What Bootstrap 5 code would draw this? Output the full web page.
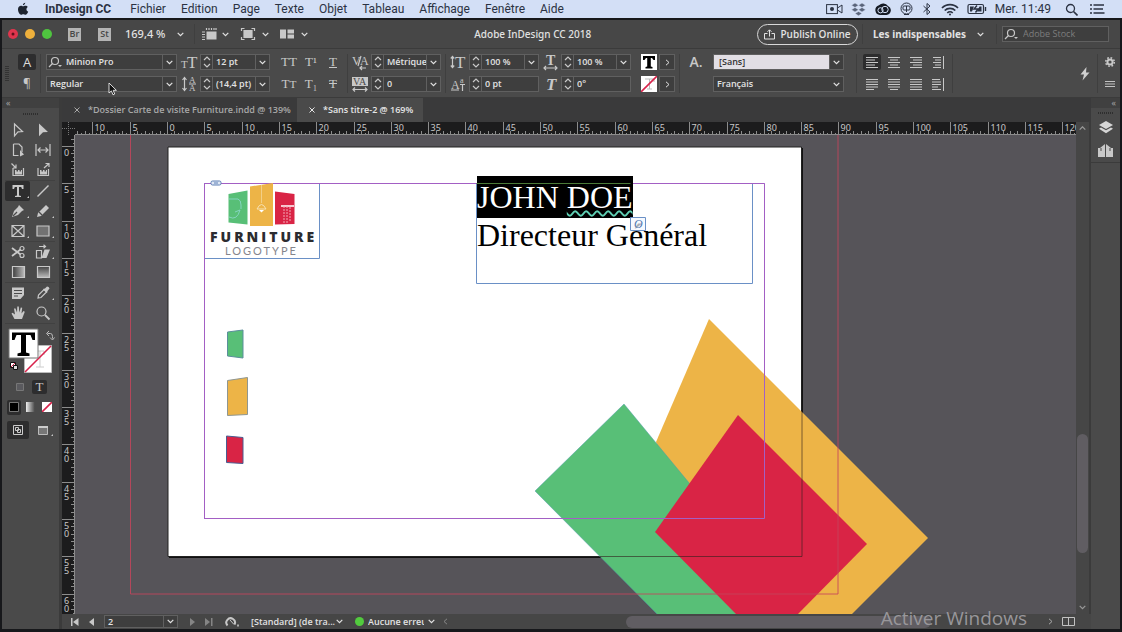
<!DOCTYPE html>
<html lang="fr">
<head>
<meta charset="utf-8">
<meta name="viewport" content="width=device-width, initial-scale=1">
<title>Adobe InDesign CC 2018</title>
<link rel="stylesheet" href="https://cdn.jsdelivr.net/npm/bootstrap@5.3.0/dist/css/bootstrap.min.css">
<style>
  :root { --panel:#4a4a4a; --line:#3b3b3b; --field:#3e3e3e; --edge:#606060; --ink:#e2e2e2; --icon:#c8c8c8; }
  html, body { height:100%; }
  body { background:#17181b; color:var(--ink); font:9px/12px "Open Sans","Noto Sans",sans-serif; overflow:hidden; }
  button, input, select { font:inherit; color:inherit; }
  button { background:none; border:0; padding:0; color:inherit; }
  svg { display:block; flex:none; }
  .ic { width:16px; height:16px; fill:none; stroke:currentColor; stroke-width:1.2; color:var(--icon); overflow:visible; }
  .chev { width:7px; height:5px; fill:none; stroke:currentColor; stroke-width:1.2; }
  .center { display:flex; align-items:center; justify-content:center; }

  .macbar { height:18px; flex:none; background:#d3dff6; color:#2b3242; font:12px/18px Roboto,sans-serif; padding-left:17px; padding-right:16px; }
  .macbar nav { gap:15px; }
  .macbar a { color:inherit; text-decoration:none; }
  .macbar svg { fill:none; stroke:#2b3242; }
  .appwin { background:var(--line); margin:2px 2px 3px 2px; min-height:0; }

  .titlebar { height:28px; flex:none; background:#474747; padding:0 11px 0 6px; }
  .dot { width:10px; height:10px; border-radius:50%; }
  .sq { width:13px; height:13px; background:#b4b4b4; color:#474747; font-size:9px; font-weight:600; line-height:12px; }
  .apptitle { font:500 10px/14px "Noto Sans",sans-serif; }
  .vsep { width:1px; align-self:stretch; background:#3f3f3f; }
  .publish { width:101px; height:21px; border:1px solid #d8d8d8; border-radius:11px; font-size:10px; font-weight:600; gap:5px; }
  .stock { width:107px; height:16px; background:var(--field); border:1px solid var(--edge); }
  .stock input { background:none; border:0; padding:0; width:80px; outline:0; }
  .stock input::placeholder { color:#7d7d7d; opacity:1; }

  .control { height:48px; flex:none; background:var(--panel); padding:5px 7px 4px 2px; margin-top:1px; }
  .pair { display:grid; grid-template-rows:16px 16px; row-gap:6px; align-content:start; }
  .rowx { display:flex; height:16px; align-items:center; }
  .fld { display:flex; flex:1; min-width:0; height:16px; background:var(--field); border:1px solid var(--edge); align-items:center; font-weight:600; }
  .fld.fixed { flex:none; }
  .fld input { background:none; border:0; padding:0 0 0 3px; flex:1; width:0; min-width:0; height:14px; outline:0; line-height:14px; }
  .fld button { width:14px; height:14px; border-left:1px solid var(--edge); flex:none; }
  .step { width:12px; height:14px; border-right:1px solid var(--edge); }
  .cell { width:22px; height:16px; }
  .on { background:#2d2d2e; border-radius:2px; }
  .metric { width:89px; }
  .serif { font:13px/16px "Liberation Serif",serif; color:var(--icon); }
  .grip { width:4px; height:16px; align-self:center; background:repeating-linear-gradient(#333 0 1px,transparent 1px 2px); }

  .tools { width:57px; flex:none; background:var(--panel); }
  .strip { height:10px; background:#404040; color:#a5a5a5; font-size:9px; line-height:9px; }
  .hgrip { height:12px; }
  .hgrip i { width:16px; height:2px; background:repeating-linear-gradient(90deg,#2e2e2e 0 1px,transparent 1px 2px); }
  .tgroup { display:grid; grid-template-columns:25px 25px; grid-auto-rows:20px; margin:0 4px 0 3px; border-bottom:1px solid #414141; }
  .tgroup button { position:relative; }
  .more::after { content:""; position:absolute; right:1px; bottom:3px; border:1px solid transparent; border-right-color:var(--icon); border-bottom-color:var(--icon); }

  .tabs { height:24px; flex:none; background:#3a3a3b; font-weight:600; font-size:9px; color:#a8a8a8; }
  .tabs button { height:24px; padding-left:12px; gap:8px; }
  .tabs .front { background:var(--panel); color:#e6e6e6; }
  .ruler { background:#1c1c1d; overflow:hidden; flex:none; }
  .ruler text { font:9px "Noto Sans",sans-serif; fill:#c8c8c8; }
  .canvas { background:#565459; position:relative; overflow:hidden; min-width:0; }
  .canvas > svg { position:absolute; left:0; top:0; }
  .textline { position:absolute; left:402px; font:32px/42px "Liberation Serif",serif; color:#000; white-space:nowrap; }
  .picked { background:#000; color:#fff; }
  .wavy { text-decoration:underline wavy #5fd0b4 2px; text-underline-offset:2px; text-decoration-skip-ink:none; }
  .vscroll { width:13px; flex:none; background:#464646; }
  .thumb { width:11px; height:119px; border-radius:6px; background:#605d62; }
  .status { height:15px; flex:none; background:#464646; font-weight:600; position:relative; }
  .hthumb { flex:0 0 305px; height:12px; border-radius:6px; background:#605d62; }
  .watermark { position:absolute; right:64px; bottom:-2px; font:19px/26px "Open Sans",sans-serif; color:#98969a; }
  .dock { width:29px; flex:none; background:var(--panel); }
</style>
</head>
<body class="d-flex flex-column">

<svg width="0" height="0" class="position-absolute" aria-hidden="true">
  <symbol id="chev" viewBox="0 0 7 5"><path d="M.7.8 3.5 3.7 6.3.8"/></symbol>
  <symbol id="updn" viewBox="0 0 8 12"><path d="M1 4 4 1l3 3M1 8l3 3 3-3"/></symbol>
  <symbol id="mag" viewBox="0 0 16 16"><circle cx="8" cy="7" r="3.5"/><path d="M5.5 9.500 2 13"/><path d="M11 11h4l-2 2z" fill="currentColor" stroke="none"/></symbol>
</svg>

<header class="macbar d-flex align-items-center">
  <svg width="12" height="14" viewBox="0 0 12 14"><path d="M8.300 .8C8 2.200 7 3.200 5.900 3.200 5.800 2 7 .9 8.300.8zM1 7.300C1 5 2.500 3.800 4 3.800c.9 0 1.400.5 2.100.5s1.300-.5 2.300-.5c1 0 1.900.5 2.400 1.300-2 1.200-1.700 3.900.4 4.700-.5 1.300-1.600 3-2.700 3-.8 0-1.200-.5-2.200-.5s-1.400.5-2.200.5C2.700 12.800 1 10 1 7.300z" fill="#1d2430" stroke="none"/></svg>
  <nav class="d-flex ms-3">
    <a href="#" class="fw-bold me-1">InDesign CC</a><a href="#">Fichier</a><a href="#">Edition</a><a href="#">Page</a><a href="#">Texte</a><a href="#">Objet</a><a href="#">Tableau</a><a href="#">Affichage</a><a href="#">Fenêtre</a><a href="#">Aide</a>
  </nav>
  <div class="d-flex align-items-center ms-auto" style="gap:8px">
    <svg width="17" height="12" viewBox="0 0 17 12"><rect x=".6" y="1.600" width="10.800" height="9"/><path d="M11.500 5 16 2v8l-4.500-3"/><circle cx="6" cy="6" r="2" fill="#2b3242" stroke="none"/></svg>
    <svg width="15" height="13" viewBox="0 0 15 13"><path d="M4 0 7.500 2.200 4 4.500.5 2.200zM11 0l3.500 2.200L11 4.500 7.500 2.200zM4 4.500l3.500 2.200L4 9 .5 6.700zM11 4.500l3.500 2.200L11 9 7.500 6.700zM7.500 8.500 11 10.500 7.500 12.800 4 10.500z" fill="#5b657b" stroke="#d3dff6" stroke-width=".5"/></svg>
    <svg width="18" height="13" viewBox="0 0 18 13"><path d="M6 12a5 5 0 0 1-1-9.800A6 6 0 0 1 14 3a4.700 4.700 0 0 1-1.500 9z" fill="#151a24" stroke="none"/><circle cx="6.500" cy="7.300" r="2.600" stroke="#d3dff6"/><circle cx="11" cy="6.500" r="3.200" stroke="#d3dff6"/></svg>
    <svg width="13" height="14" viewBox="0 0 13 14"><circle cx="6.500" cy="6.500" r="5.500"/><rect x="3" y="4" width="7" height="4" rx="1"/><path d="M6.500 4v6M4 12.500h5"/></svg>
    <svg width="12" height="14" viewBox="0 0 12 14"><path d="M2.500 4 9 10 6 12.500V1.500L9 4 2.500 10"/></svg>
    <svg width="18" height="13" viewBox="0 0 18 13" stroke-width="1.700"><path d="M1 5a11 11 0 0 1 16 0M3.700 7.500a7.500 7.500 0 0 1 10.600 0M6.300 10a3.900 3.900 0 0 1 5.400 0"/><circle cx="9" cy="11.500" r="1" fill="#2b3242" stroke="none"/></svg>
    <svg width="20" height="12" viewBox="0 0 20 12"><rect x="1" y="1.500" width="15.500" height="9" rx="1.500" stroke-width="1.200"/><path d="M3 3.500h4L5 8.500H3zM14.500 3.500h-2l-2.500 5h4.500z" fill="#2b3242" stroke="none"/><path d="M10 2.500 7 6h4L8.500 9.500M18.500 4v4" stroke-width="1.400"/></svg>
    <span style="margin-right:6px">Mer. 11:49</span>
    <svg width="13" height="13" viewBox="0 0 13 13"><circle cx="5.500" cy="5.500" r="4" stroke-width="1.300"/><path d="m8.500 8.500 4 4" stroke-width="1.600"/></svg>
    <svg width="16" height="12" viewBox="0 0 16 12" class="ms-1" stroke-width="1.600"><path d="M0 2h2M3.500 2H14M0 6h2M3.500 6H13M0 10h2M3.500 10h11"/></svg>
  </div>
</header>

<div class="appwin d-flex flex-column flex-grow-1">
  <div class="titlebar d-flex align-items-center">
    <div class="d-flex" style="gap:7px"><span class="dot center" style="background:#e0354d"><svg width="4" height="4"><circle cx="2" cy="2" r="1.500" fill="#60101c"/></svg></span><span class="dot" style="background:#eeb03c"></span><span class="dot" style="background:#4fc43f"></span></div>
    <button class="sq" style="margin-left:16px">Br</button>
    <button class="sq" style="margin-left:17px">St</button>
    <button class="d-flex align-items-center" style="margin-left:14px;gap:12px;font:500 11px/14px 'Noto Sans',sans-serif"><span>169,4 %</span><svg class="chev"><use href="#chev"/></svg></button>
    <span class="vsep my-1" style="margin-left:10px"></span>
    <button class="d-flex align-items-center" style="margin-left:6px;gap:5px"><svg class="ic" viewBox="0 0 16 16"><path d="M5.500 5.500h10v8h-10z" fill="currentColor" stroke="none"/><path d="M5.500 2v2M8 2v2M10.500 2v2M13 2v2M15 2v2M1 6h3M1 8.500h3M1 11h3M1 13.500h3"/></svg><svg class="chev"><use href="#chev"/></svg></button>
    <button class="d-flex align-items-center" style="margin-left:11px;gap:6px"><svg class="ic" viewBox="0 0 16 16"><path d="M4 4.500h8v7H4z" fill="currentColor"/><path d="M1.500 5V2.500h3M11.500 2.500h3V5M14.500 11v2.500h-3M4.500 13.500h-3V11"/></svg><svg class="chev"><use href="#chev"/></svg></button>
    <button class="d-flex align-items-center" style="margin-left:10px;gap:6px"><svg class="ic" viewBox="0 0 16 16"><path d="M1 3.500h6v9H1zM8.500 3.500H15v4H8.500zM8.500 8.500H15v4H8.500z" fill="currentColor" stroke="none"/></svg><svg class="chev"><use href="#chev"/></svg></button>
    <span class="apptitle mx-auto">Adobe InDesign CC 2018</span>
    <button class="publish center"><svg width="11" height="11" viewBox="0 0 11 11" fill="none" stroke="currentColor"><path d="M3.500 4.500h-3v5.500h10V4.500h-3M5.500 7.500V1M3.500 2.800 5.500.8l2 2"/></svg>Publish Online</button>
    <span class="vsep my-1" style="margin-left:4px"></span>
    <button class="d-flex align-items-center" style="margin-left:10px;gap:8px;font:700 10px/14px 'Noto Sans',sans-serif"><span class="text-start" style="min-width:96px">Les indispensables</span><svg class="chev"><use href="#chev"/></svg></button>
    <span class="vsep my-1" style="margin-left:12px"></span>
    <label class="stock d-flex align-items-center" style="margin-left:5px"><svg class="ic me-1"><use href="#mag"/></svg><input type="text" placeholder="Adobe Stock" aria-label="Adobe Stock"></label>
  </div>

  <div class="control d-flex">
    <span class="grip" style="margin-left:1px"></span>
    <div class="pair" style="width:18px;margin-left:9px"><button class="on center" style="font-size:13px;color:#ddd">A</button><button class="center" style="font-size:12px;color:var(--icon)">¶</button></div>
    <span class="vsep ms-1"></span>
    <div class="pair" style="width:131px;margin-left:5px">
      <div class="rowx"><div class="fld"><svg class="ic"><use href="#mag"/></svg><input value="Minion Pro" aria-label="Police"><button class="center" aria-label="Polices"><svg class="chev"><use href="#chev"/></svg></button></div></div>
      <div class="rowx"><div class="fld"><input value="Regular" aria-label="Style"><button class="center" aria-label="Styles"><svg class="chev"><use href="#chev"/></svg></button></div></div>
    </div>
    <div class="pair metric" style="margin-left:4px" data-fields="size|12 pt|1;lead|(14,4 pt)|1"></div>
    <div class="pair" style="width:66px;margin-left:8px">
      <div class="rowx serif"><button class="cell">TT</button><button class="cell">T¹</button><button class="cell"><u>T</u></button></div>
      <div class="rowx serif"><button class="cell">T<small>T</small></button><button class="cell">T₁</button><button class="cell"><s>T</s></button></div>
    </div>
    <span class="vsep" style="margin-left:3px"></span>
    <div class="pair metric ms-1" data-fields="kern|Métrique|1;track|0|1"></div>
    <span class="vsep ms-1"></span>
    <div class="pair metric ms-1" data-fields="vscale|100 %|1;shift|0 pt|0"></div>
    <div class="pair metric" style="margin-left:3px" data-fields="hscale|100 %|1;skew|0°|0"></div>
    <div class="pair" style="width:34px;margin-left:10px">
      <div class="rowx justify-content-between"><svg width="16" height="16"><path fill="#fff" d="M0 0h16v16H0z"/><path d="M2 2h12v4h-1.500L11 4H9.800v8.500l1.700.5v1.500h-7V13l1.700-.5V4H5L3.500 6H2z"/></svg><div class="fld fixed"><button class="center border-0" aria-label="Fond"><svg width="5" height="7" fill="none" stroke="currentColor"><path d="m1 .8 3 2.700-3 2.700"/></svg></button></div></div>
      <div class="rowx justify-content-between"><svg width="16" height="16"><path fill="#fff" d="M0 0h16v16H0z"/><path d="M4 3h9v3M8.500 3v10M6 13h5" stroke="#bbb" fill="none"/><path d="M0 16 16 0" stroke="#d8234b" stroke-width="1.600"/></svg><div class="fld fixed"><button class="center border-0" aria-label="Contour"><svg width="5" height="7" fill="none" stroke="currentColor"><path d="m1 .8 3 2.700-3 2.700"/></svg></button></div></div>
    </div>
    <span class="vsep" style="margin-left:4px"></span>
    <div class="pair" style="width:20px;margin-left:6px;font-size:14px;font-weight:600;color:var(--icon)"><span class="center">A.</span></div>
    <div class="pair" style="width:131px;margin-left:7px">
      <div class="rowx"><div class="fld"><input value="[Sans]" aria-label="Style de caractère" style="background:#e2dfe5;color:#333;padding-left:5px"><button class="center" aria-label="Styles de caractère"><svg class="chev"><use href="#chev"/></svg></button></div></div>
      <div class="rowx"><div class="fld"><input value="Français" aria-label="Langue"><button class="center border-0" aria-label="Langues"><svg class="chev"><use href="#chev"/></svg></button></div></div>
    </div>
    <span class="vsep" style="margin-left:12px"></span>
    <div class="pair" style="width:88px;margin-left:4px" id="aligns"></div>
    <span class="vsep" style="margin-left:3px"></span>
    <svg class="ms-auto align-self-center" width="10" height="14" viewBox="0 0 10 14"><path d="M6.500 0 .5 7.500H4L2.500 13.500 9.500 5.500H6z" fill="#d0d0d0"/></svg>
    <span class="vsep" style="margin-left:7px"></span>
    <div class="pair" style="width:15px;margin-left:4px;margin-right:-4px">
      <button class="center"><svg width="12" height="12" viewBox="0 0 12 12" fill="none" stroke="#c8c8c8"><circle cx="6" cy="6" r="2.600" stroke-width="2"/><circle cx="6" cy="6" r="4.300" stroke-width="1.500" stroke-dasharray="1.700 1.680"/></svg></button>
      <button class="center"><svg width="10" height="8" stroke="#c2c2c2"><path d="M0 1.500h10M0 4h10M0 6.500h10"/></svg></button>
    </div>
  </div>

  <div class="d-flex flex-grow-1" style="min-height:0;margin-top:1px">
    <aside class="tools d-flex flex-column">
      <div class="strip ps-1">«</div>
      <div class="hgrip center"><i></i></div>
      <div class="tgroup" id="t1"></div>
      <div class="tgroup" id="t2"></div>
      <div class="tgroup" id="t3"></div>
      <div class="tgroup" id="t4"></div>
      <svg width="57" height="50" viewBox="0 0 57 50" style="margin-top:2px"><path d="M22.500 19.500h27v27h-27z" fill="#fff" stroke="#bbb"/><path d="M29 25h13v4M38 25v16M34 41h8" stroke="#ccc" fill="none"/><path d="M23 46 49 20" stroke="#d8234b" stroke-width="1.600"/><path d="M7 3h29v29H7z" fill="#fff" stroke="#777"/><path d="M10 6.500h23V14h-2.500L28.500 9H24v17.500l3.500 1V30h-12v-2.500l3.500-1V9h-4.500L12.500 14H10z"/><path d="M45.500 7.500h3q2 0 2 3v2M47 5l-2.500 2.500L47 10M48 11.500l2.500 2.500 2-2.500" fill="none" stroke="#bbb"/><path d="M8.500 36.500h5v5h-5z" fill="#fff" stroke="#111"/><path d="M11.500 39.500h4v4h-4z" fill="#ddd" stroke="#111"/><path d="m9 41 4-4" stroke="#d8234b"/></svg>
      <div class="d-flex align-items-center" style="height:16px;margin:3px 0 0 14px"><svg width="8" height="8"><path d="M.5.5h7v7h-7z" fill="#5a5a5e" stroke="#777"/></svg><button class="on center serif" style="width:15px;height:14px;margin-left:8px">T</button></div>
      <div class="d-flex align-items-center" style="height:18px;margin:3px 0 0 5px;gap:3px"><button class="on center" style="width:14px;height:15px"><svg width="10" height="10"><path d="M.5.5h9v9h-9z" stroke="#777"/></svg></button><button class="center" style="width:13px"><span style="width:9px;height:10px;background:linear-gradient(90deg,#eee,#444)"></span></button><button class="center" style="width:14px"><svg width="10" height="10"><path fill="#fff" d="M0 0h10v10H0z"/><path d="M0 10 10 0" stroke="#d8234b" stroke-width="1.600"/></svg></button></div>
      <div class="d-flex align-items-center" style="height:20px;margin:4px 0 0 5px;gap:3px"><button class="on center" style="width:22px;height:18px"><svg width="10" height="10" fill="none" stroke="#ccc"><path d="M.5.5h9v9h-9zM2.500 2.500h3v3h-3zM4.500 4.500h3v3h-3z"/></svg></button><button class="center more position-relative" style="width:22px;height:18px"><svg width="10" height="9"><path d="M.5.500h9v8h-9z" fill="#777" stroke="#bbb"/><path d="M0 1h10" stroke="#ccc" stroke-width="2"/></svg></button></div>
    </aside>

    <main class="d-flex flex-column flex-grow-1" style="margin-left:3px;min-width:0">
      <div class="tabs d-flex">
        <button class="d-flex align-items-center" style="width:235px"><svg width="6" height="6" stroke="currentColor"><path d="m.5.5 5 5M5.500.5l-5 5"/></svg><span class="text-nowrap">*Dossier Carte de visite Furniture.indd @ 139%</span></button>
        <button class="front d-flex align-items-center" style="width:126px"><svg width="6" height="6" stroke="currentColor"><path d="m.5.5 5 5M5.500.5l-5 5"/></svg><span class="text-nowrap">*Sans titre-2 @ 169%</span></button>
      </div>
      <div class="d-flex flex-grow-1" style="min-height:0">
        <div class="d-flex flex-column flex-grow-1" style="min-width:0">
          <div class="ruler" style="height:13px"><svg id="hr" width="1600" height="13"></svg></div>
          <div class="d-flex flex-grow-1" style="min-height:0">
            <div class="ruler" style="width:13px"><svg id="vr" width="13" height="1200"></svg></div>
            <div class="canvas flex-grow-1">
              <svg width="1000" height="479" viewBox="75 135 1000 479" fill="none">
                <path d="M169 148h634v410H169z" fill="#111"/>
                <path d="M168 147h633.500v409.500H168z" fill="#fff" stroke="#222"/>
                <path d="m709 319 219 219-77 77H700l-44-173z" fill="#edb447"/>
                <path d="m624 404 66 80-20 50 67 81h-79L535 491z" fill="#58bf77" stroke="#4f9aa8" stroke-width=".5"/>
                <path d="m738 415 129 129-70 71h-60l-82-83z" fill="#d92445"/>
                <path d="M802 410v146.500H600" stroke="#30201c" opacity=".6"/>
                <path d="M130.500 135v459h707.500V135" stroke="#c4455c" opacity=".85"/>
                <path d="M204.500 183.500h560v335h-560z" stroke="#a35fc4"/>
                <path d="M204.500 183.500h115v75h-115zM476.500 183.500h276v100h-276z" stroke="#6a90c6"/>
                <path d="M204.500 519V183.500h560" stroke="#a35fc4"/>
                <rect x="211" y="181" width="10" height="4" rx="1.500" fill="#dfe8f5" stroke="#5d7fb5"/><path d="M214 183h4" stroke="#5d7fb5"/>
                <path d="m228.500 194 19-3.500v34l-19-2z" fill="#58bf77"/><path d="m250 186.500 23-3.500v43h-23z" fill="#edb447"/><path d="m275 191.500 19.500 2.500v30l-19.500.5z" fill="#d92445"/>
                <path d="M229 199h9q3 1 3 6v4M235 212l5-2M229 217q8 4 11-7" stroke="#8fd9d0" stroke-width=".8"/>
                <path d="M261.500 185v18" stroke="#f3cf86"/><path d="M257 209q4.500-9 9 0z" stroke="#f7e2b4"/><path d="M259 210h5l-2.500 2.500z" fill="#fff"/>
                <path d="M281 206h13" stroke="#fff" stroke-width="1.500"/><path d="M284 206v17M287 206v17M290 207v14" stroke="#f3a9b7" stroke-dasharray="2 1"/>
                <path d="m227.500 332 15.500-2v28l-15.500-2z" fill="#58bf77" stroke="#5b8f9c"/>
                <path d="m227.500 380.500 20-3v37l-20 1z" fill="#edb447" stroke="#8f9690"/>
                <path d="m226.500 436 16.500 1.500v26l-16.500-1z" fill="#d92445" stroke="#4a5c90"/>
                <text x="210" y="242" font-family="Open Sans" font-weight="800" font-size="14" letter-spacing="3" fill="#2c2c30">FURNITURE</text>
                <text x="225" y="255" font-family="Lato" font-size="11" letter-spacing="2" fill="#85858c">LOGOTYPE</text>
              </svg>
              <div class="textline picked" style="top:41px">JOHN <span class="wavy">DOE</span></div>
              <div class="textline" style="top:79px">Directeur Général</div>
              <svg width="1000" height="479" viewBox="75 135 1000 479" fill="none"><path d="M476.500 183.500h154" stroke="#4b7a38"/><path d="M630.500 217.500h15v13h-15z" fill="#f2f7ff" fill-opacity=".7" stroke="#6a90c6"/><text x="634" y="228" font-family="Liberation Serif" font-style="italic" font-size="12" fill="#4f77b0">O</text></svg>
            </div>
          </div>
        </div>
        <div class="vscroll d-flex flex-column align-items-center"><svg class="chev" style="margin-top:4px;color:#999" viewBox="0 0 7 5"><path d="M.7 3.700 3.500.8l2.800 2.900"/></svg><div class="thumb mt-auto" style="margin-bottom:52px"></div><svg class="chev mb-1" style="color:#999"><use href="#chev"/></svg></div>
        <div style="width:3px"></div>
      </div>
      <div class="status d-flex align-items-center">
        <svg width="32" height="8" style="margin-left:9px" fill="#c8c8c8"><path d="M0 0h1.500v8H0zM7.500 0v8L2 4zM23 0v8l-5-4z"/></svg>
        <div class="fld fixed" style="height:13px;width:74px;margin-left:1px"><input value="2" aria-label="Page" style="height:11px;line-height:11px"><button class="center" aria-label="Pages" style="height:11px"><svg class="chev"><use href="#chev"/></svg></button></div>
        <svg width="24" height="8" style="margin-left:11px" fill="#858585"><path d="M1 0v8l5-4zM16 0v8l5-4zM22 0h1.500v8H22z"/></svg>
        <svg width="14" height="11" style="margin-left:12px" viewBox="0 0 14 11" fill="none"><path d="M2.500 9.500A4.300 4.300 0 1 1 9.500 8.500" stroke="#c8c8c8" stroke-width="2"/><path d="m5 4 4 4.500" stroke="#c8c8c8"/><path d="M12 8.500h2v2h-2z" fill="#aaa"/></svg>
        <button class="d-flex align-items-center" style="margin-left:12px;gap:7px"><span class="text-nowrap text-start" style="width:78px">[Standard] (de tra...</span><svg class="chev"><use href="#chev"/></svg></button>
        <button class="d-flex align-items-center" style="margin-left:12px;gap:4px"><span class="dot" style="width:9px;height:9px;background:#52cb3e"></span><span class="overflow-hidden text-nowrap" style="width:56px">Aucune erreur</span><svg class="chev"><use href="#chev"/></svg></button>
        <svg width="5" height="7" fill="none" stroke="#888" style="margin-left:8px"><path d="m4 .8-3 2.700 3 2.700"/></svg>
        <div class="hthumb ms-auto"></div>
        <svg width="5" height="7" fill="none" stroke="#aaa" style="margin-left:117px"><path d="m1 .8 3 2.700-3 2.700"/></svg>
        <svg width="13" height="9" fill="none" stroke="#c2c2c2" style="margin:0 16px 0 9px"><path d="M.5.5h12v8H.5zM6.500 0v9"/></svg>
        <div class="watermark">Activer Windows</div>
      </div>
    </main>

    <aside class="dock d-flex flex-column">
      <div class="strip text-end pe-1">«</div>
      <div class="hgrip center" style="height:9px"><i></i></div>
      <button class="center" style="height:22px"><svg width="14" height="14" viewBox="0 0 14 14" fill="#d5d5d5"><path d="m7 0 7 4-7 4-7-4zM2 6.500 7 9.300l5-2.800 2 1.200-7 4.500L0 7.700z"/></svg></button>
      <button class="center" style="height:24px;border-bottom:1px solid #3b3b3b"><svg width="15" height="15" viewBox="0 0 15 15" fill="#c8c8c8"><path d="M0 5h2l5-4v13H0zM8 1l5 4h2v9H8z"/><path d="M7.500 0v15M3 5v3M12 5v3" stroke="#4a4a4a"/></svg></button>
    </aside>
  </div>
</div>

<svg width="9" height="14" viewBox="0 0 9 14" style="position:absolute;left:108px;top:82px"><path d="M1 1v10l2.400-2.100L5 12.800l1.700-.8L5.200 8.300h3.200z" fill="#111" stroke="#eee" stroke-width=".9"/></svg>

<script src="https://cdn.jsdelivr.net/npm/bootstrap@5.3.0/dist/js/bootstrap.bundle.min.js"></script>
<script>
  // Glyphs beside the numeric character fields
  const S = 'font-family="Liberation Serif" fill="currentColor" stroke="none"';
  const glyph = {
    size: `<text x="0" y="14" font-size="11" ${S}>T</text><text x="6" y="14" font-size="17" ${S}>T</text>`,
    lead: `<text x="8" y="7" font-size="9" ${S}>A</text><text x="8" y="15" font-size="9" ${S}>A</text><path d="M3.500 2v12M1.500 4l2-2.500 2 2.500M1.500 12l2 2.500 2-2.500M8 8h7"/>`,
    kern: `<text x="0" y="11" font-size="12" ${S}>V</text><text x="8" y="11" font-size="12" ${S}>A</text><path d="M9 2 6 12M14 14H8M10 12l-2 2 2 2"/>`,
    track: `<path d="M0 1h16v9H0z" fill="currentColor" stroke="none"/><text x="1" y="9" font-size="10" fill="#4a4a4a" stroke="none" font-family="Liberation Serif">VA</text><path d="M1 13.500h14M3 11.500l-2 2 2 2M13 11.500l2 2-2 2"/>`,
    vscale: `<path d="M2.500 3v10M.8 4.500l1.700-2 1.700 2M.8 11.500l1.700 2 1.700-2"/><text x="5" y="14" font-size="17" ${S}>T</text>`,
    shift: `<text x="1" y="13" font-size="12" ${S}>A</text><text x="10" y="7" font-size="8" ${S}>a</text><path d="M10 8.500h5M12.500 9v6M1 14h8"/>`,
    hscale: `<text x="4" y="11" font-size="14" font-weight="bold" ${S}>T</text><path d="M2 14h13M4 12l-2 2 2 2M13 12l2 2-2 2"/>`,
    skew: `<text x="4" y="14" font-size="17" font-weight="bold" font-style="italic" ${S}>T</text>`
  };
  const chev = '<svg class="chev"><use href="#chev"/></svg>';
  document.querySelectorAll('[data-fields]').forEach(p => {
    p.innerHTML = p.dataset.fields.split(';').map(f => {
      const [k, v, dd] = f.split('|');
      return `<div class="rowx"><svg class="ic" style="margin-right:3px">${glyph[k]}</svg><div class="fld"><span class="step center"><svg class="ic" style="width:8px;height:12px"><use href="#updn"/></svg></span><input aria-label="${k}" value="${v}">${dd === '1' ? `<button class="center" aria-label="${k} menu">${chev}</button>` : ''}</div></div>`;
    }).join('');
  });

  // Paragraph alignment buttons: start and end of each of the five lines
  const al = [['0 12','0 9','0 12','0 9','0 12'],['0 12','2 10','0 12','2 10','0 12'],['0 12','3 12','0 12','3 12','0 12'],['1 9','3 9','1 9','3 9','1 9'],
              ['0 12','0 12','0 12','0 12','0 8'],['0 12','0 12','0 12','0 12','2 10'],['0 12','0 12','0 12','0 12','0 12'],['0 8','0 9','0 9','0 6','0 9']];
  const alignBtn = (a, i) => `<button class="cell center"><span class="center ${i ? '' : 'on'}" style="width:18px;height:16px"><svg width="13" height="13" stroke="#c8c8c8">${a.map((s, r) => { const [x, y] = s.split(' '); return `<path d="M${x} ${r * 2.5 + 1.5}H${y}"/>`; }).join('')}${i % 4 === 3 ? '<path d="M11.500 0v13"/>' : ''}</svg></span></button>`;
  document.getElementById('aligns').innerHTML = [0, 4].map(n => '<div class="rowx">' + al.slice(n, n + 4).map((a, i) => alignBtn(a, i + n)).join('') + '</div>').join('');

  // Toolbox, one entry per tool; "+" marks a tool with a fly-out, "*" the active one
  const F = 'fill="currentColor" stroke="none"';
  const T = {
    t1: ['<path d="m4.500 2 8 7.500-4.500.3-3.500 4z"/>', `<path ${F} d="m4 1.500 9 8.500-5 .3-4 4z"/>`,
         '<path d="M3.500 2h5.500l3 3v5M3.500 2v11.500h5"/>' + `<path ${F} d="m10 8 4 4.500-4 2z"/>`, '<path d="M1 2v12M15 2v12M3 8h10M5.500 5.500 3 8l2.500 2.500M10.500 5.500 13 8l-2.500 2.500"/>',
         `<path d="M3 6v7.500h10.500V6M1.500 1.500l4 4M6 2.500V6H3"/><path ${F} d="M5 8h1.500v1.500H8V8h1.500v1.500H11V8h1v4.500H5z"/>`, `<path d="M3 6v7.500h10.500V7M9 6l5-4.500M10.500 1.500H14V5"/><path ${F} d="M5 8h1.500v1.500H8V8h1.500v1.500H11V8h1v4.500H5z"/>`],
    t2: [`*<path ${F} d="M2.500 2h11v4H12l-.8-2H9v8.500l2 .5v1H5v-1l2-.5V4H4.800L4 6H2.500z"/>`, '<path d="M2.500 13.500 13.500 2.500" stroke-width="1.500"/>',
         `+<path ${F} d="M2 14 4 8l4-4 1-2 5 5-2 1-4 4z"/><path d="m3 13 4-4" stroke="#4a4a4a"/>`, `+<path ${F} d="m2 14 1-4 8-8 3 3-8 8z"/><path d="m4 9 3 3" stroke="#4a4a4a"/>`,
         '+<path d="M2 2.500h12v11H2zM2 2.500l12 11M14 2.500l-12 11"/>', '+<path d="M2 3h12v10H2z" fill="#727272"/>'],
    t3: ['<circle cx="12" cy="4.500" r="2"/><circle cx="12" cy="11.500" r="2"/><path d="m2 4 8.500 6.500M2 12l8.500-6.500" stroke-width="1.800"/>', `+<path d="M1.500 6.500h5V14h-5zM4 2.500h6M8.500.8l2 1.700-2 1.700"/><path ${F} d="M9.500 5.500H15L11.500 14H6.500z"/>`,
         '<path d="M2.500 2.500h12v11h-12z" fill="url(#g1)"/>', '<path d="M2.500 2.500h12v11h-12z" fill="url(#g2)"/>'],
    t4: [`<path ${F} d="M2 2.500h12V10l-3.500 4H2z"/><path d="M4 5.500h8M4 8.500h8M4 11h4" stroke="#4a4a4a"/>`, `+<path d="m3 13 .5-3L9 4.500 11.500 7 6 12.500z"/><path ${F} d="m8 4 2-.5 2-2q2 0 2.500 2l-2 2.500-.5 2z"/>`,
         `<path ${F} d="M4.500 14 1.500 8.500l1-.8L5 9.500 4 3.500h1.500L7 7.500 7.300 1.500h1.500L9.300 7.500l1.500-5 1.400.3-.7 5.700 2-2.500 1.300.7L12 14z"/>`, '<circle cx="6.500" cy="6.500" r="4.500"/><path d="m10 10 4.500 4.500" stroke-width="1.800"/>']
  };
  const defs = '<defs><linearGradient id="g1"><stop stop-color="#3c3c3c"/><stop offset="1" stop-color="#bbb"/></linearGradient><linearGradient id="g2" x2="0" y2="1"><stop stop-color="#444"/><stop offset="1" stop-color="#bbb"/></linearGradient></defs>';
  for (const id in T) document.getElementById(id).innerHTML = T[id].map(s => {
    const more = s[0] === '+' || s[0] === '*', on = s[0] === '*';
    return `<button class="center ${more ? 'more' : ''} ${on ? 'on' : ''}"><svg class="ic" viewBox="0 0 16 16">${defs}${more ? s.slice(1) : s}</svg></button>`;
  }).join('');

  // Rulers in millimetres: 7.46 px per mm, origin on the page's top left corner
  const mm = 7.46, hr = document.getElementById('hr'), vr = document.getElementById('vr');
  const wide = hr.parentNode.clientWidth, tall = vr.parentNode.clientHeight;
  let h = '<path d="M6.500 0v13M0 6.500h13" stroke="#777" stroke-dasharray="1 1"/>', v = '';
  for (let n = -12; n <= 200; n++) {
    const x = Math.round(105 + n * mm) + .5, y = Math.round(11 + n * mm) + .5, big = n % 5 === 0;
    if (x > 13 && x < wide) h += `<path d="M${x} ${big ? 0 : 9}V13M${x + 4} 11V13" stroke="#8c8c8c"/>` + (big ? `<text x="${x + 2}" y="9">${Math.abs(n)}</text>` : '');
    if (y > 0 && y < tall) v += `<path d="M${big ? 0 : 9} ${y}H13M11 ${y + 4}H13" stroke="#8c8c8c"/>`;
    if (y > 0 && y < tall && big) [...String(Math.abs(n))].forEach((c, i) => v += `<text x="2" y="${y + 9 + i * 8}">${c}</text>`);
  }
  hr.innerHTML = h + '<path d="M13 12.500H1600" stroke="#8c8c8c"/>';
  vr.innerHTML = v + '<path d="M12.500 0V1200" stroke="#8c8c8c"/>';
</script>
</body>
</html>
